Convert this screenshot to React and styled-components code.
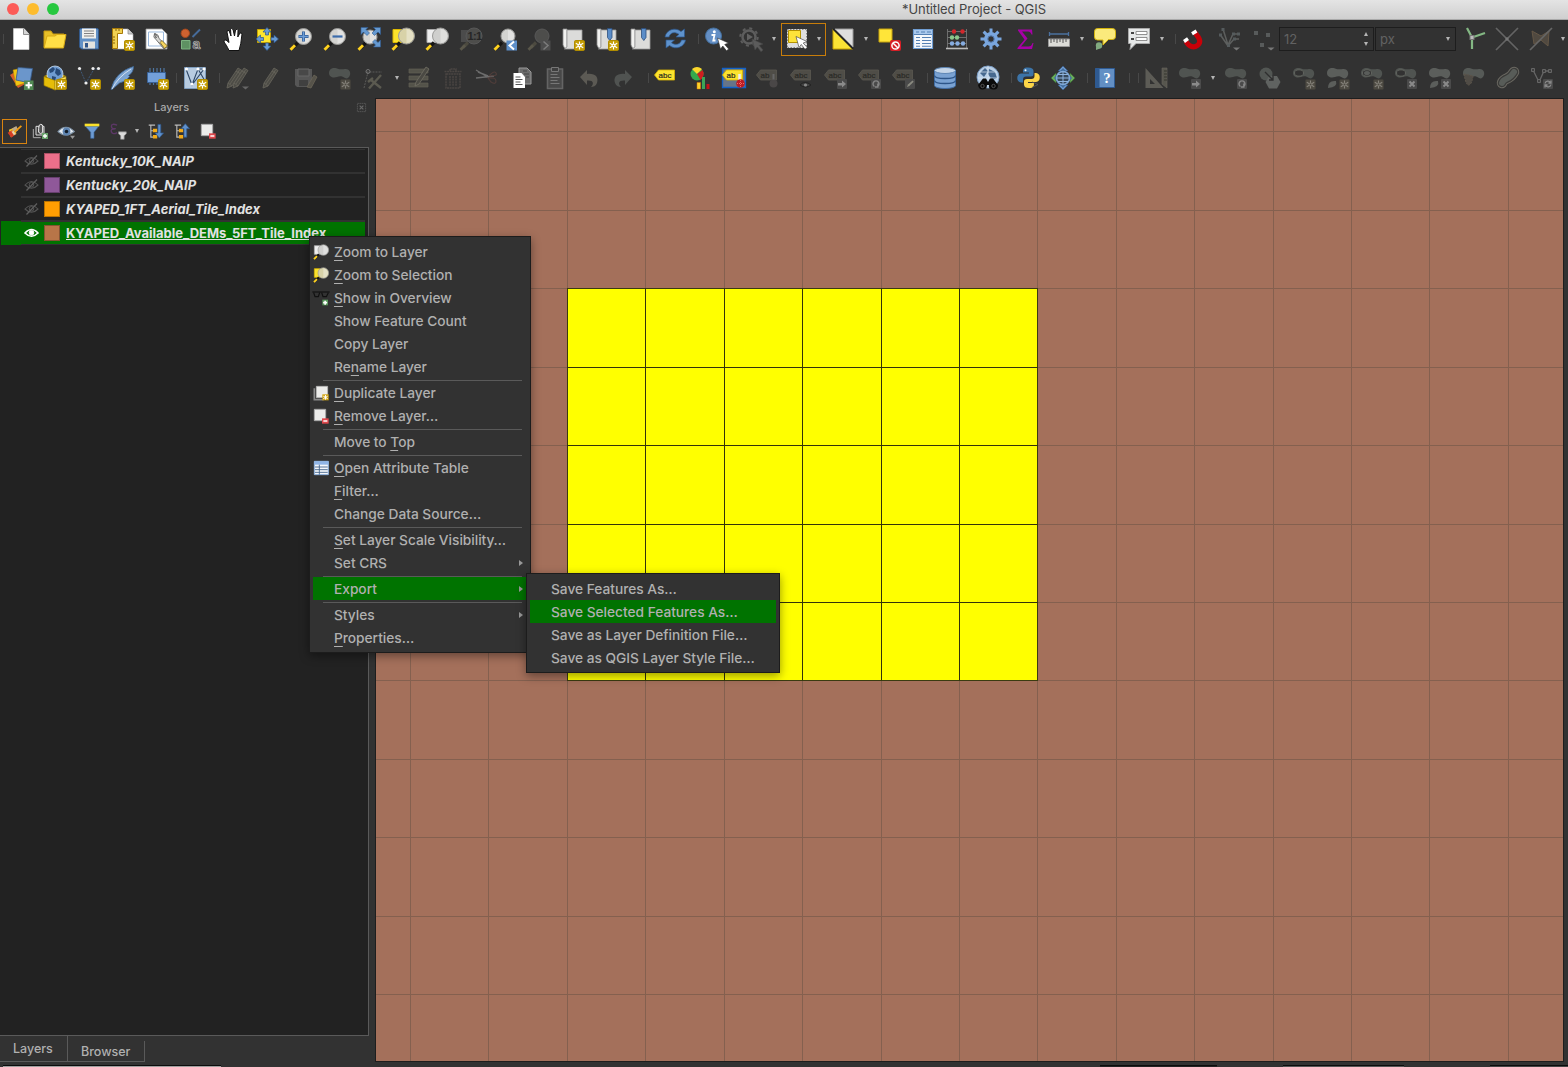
import React from "react";
import styled, { createGlobalStyle, css } from "styled-components";

const Global = createGlobalStyle`
  * { box-sizing: border-box; }
  body { margin: 0; background: #323232; overflow: hidden; }
`;

/* ---------- frame ---------- */
const Window = styled.div`
  width: 1568px; height: 1067px; display: flex; flex-direction: column;
  background: #323232; color: #b4b4b4; overflow: hidden; position: relative;
  font-family: Inter, "Liberation Sans", sans-serif; font-size: 14px;
`;
const TitleBar = styled.header`
  height: 20px; flex: none; display: flex; align-items: center;
  background: linear-gradient(#e4e4e4, #cfcfcf); border-bottom: 1px solid #a9a9a9;
`;
const Lights = styled.div`
  display: flex; gap: 8px; padding-left: 7px; width: 902px; padding-bottom: 1px;
`;
const Light = styled.span`
  width: 12px; height: 12px; border-radius: 50%; background: ${p => p.$c};
`;
const Title = styled.span`
  color: #454545; font-size: 13px; letter-spacing: -0.08px; white-space: pre; padding-bottom: 1px;
`;
const Toolbar = styled.div`
  height: ${p => p.$h}px; flex: none; display: flex; align-items: center; overflow: hidden;
`;
const Tool = styled.div`
  flex: 0 0 ${p => p.$w || 34}px; height: 34px; display: flex; align-items: center; justify-content: center;
`;
const ActiveTool = styled.div`
  flex: 0 0 45px; height: 33px; border: 1px solid #c87d0a; display: flex; align-items: center; padding-left: 3px; gap: 8px;
`;
const Sep = styled.div`
  flex: 0 0 ${p => p.$w}px; height: 10px; border-right: 1px solid #484848; margin-right: ${p => p.$after || 0}px;
`;
const ArrowBox = styled.div`
  flex: 0 0 ${p => p.$w || 12}px; display: flex; justify-content: center; align-items: center;
`;
const Down = styled.i`
  border: 2px solid transparent; border-top: 4px solid #b5b5b5; border-bottom: 0;
`;
const Up = styled(Down)`
  border-top: 0; border-bottom: 4px solid #b5b5b5;
`;
const Field = styled.div`
  flex: 0 0 ${p => p.$w}px; height: 24px; border: 1px solid #1d1d1d; display: flex; align-items: center;
  justify-content: space-between; padding: 0 5px 0 4px; color: #626262; font-size: 13px; margin-right: ${p => p.$mr}px;
`;
const Spin = styled.div`
  display: flex; flex-direction: column; gap: 6px;
`;

/* ---------- body ---------- */
const Body = styled.div`
  flex: none; height: 964px; display: flex;
`;
const Panel = styled.aside`
  width: 369px; display: flex; flex-direction: column; margin-right: 6px;
`;
const PanelHead = styled.div`
  height: 18px; display: flex; align-items: center; padding: 0 3px 0 154px; justify-content: space-between;
  font-size: 11px; letter-spacing: 0px; font-weight: 500; color: #a8a8a8;
`;
const PanelTools = styled.div`
  height: 31px; display: flex; align-items: center; padding-left: 1px; padding-bottom: 1px;
`;
const PTool = styled.div`
  flex: 0 0 26px; height: 25px; display: flex; align-items: center; justify-content: center;
  ${p => p.$on && css`border: 1px solid #d98410; flex-basis: 25px; margin-left: 1px;`}
`;
const List = styled.div`
  flex: 0 0 889px; border: 1px solid #5a5a5a; border-left: 0; background: #222; padding: 0 3px 0 1px;
`;
const LayerRow = styled.div`
  height: 24px; display: flex; align-items: center; padding-left: 23px;
  background:
    linear-gradient(#323232, #323232) 20px 0 / 100% 1px no-repeat,
    linear-gradient(#323232, #323232) 20px 100% / 100% 1px no-repeat,
    ${p => (p.$sel ? "#007300" : "#222")};
  color: #e2e2e2; font-size: 13px; font-weight: 700; font-style: ${p => (p.$sel ? "normal" : "italic")};
  &:first-child { margin-top: 1px; }
`;
const Swatch = styled.span`
  width: 16px; height: 16px; margin: 0 6px 0 5px; background: ${p => p.$c}; border: 1px solid rgba(0,0,0,.28);
`;
const LayerName = styled.span`
  white-space: nowrap; letter-spacing: ${p => p.$ls || 0}px;
  ${p => p.$u && css`text-decoration: underline; text-decoration-thickness: 1px; text-underline-offset: 1px; text-decoration-skip-ink: none;`}
`;
const Tabs = styled.div`
  height: 26px; display: flex; align-items: flex-end; font-size: 12.5px; color: #b0b0b0; font-weight: 500;
`;
const Tab = styled.div`
  width: ${p => p.$w}px; height: ${p => p.$h}px; display: flex; align-items: center; padding-left: 13px;
  border-right: 1px solid #5a5a5a; border-bottom: 1px solid #5a5a5a;
`;
const MapFrame = styled.main`
  width: 1189px; height: 964px; border: 1px solid #1e1e1e; background: #a4705b;
`;
const Status = styled.footer`
  flex: 1; display: flex; align-items: flex-end; padding-left: 3px;
`;
const StatusBit = styled.div`
  width: ${p => p.$w}px; height: 2px; margin-right: ${p => p.$mr}px; border-top: 1px solid #0c0c0c; background: ${p => p.$c};
`;

/* ---------- menus ---------- */
const Menu = styled.nav`
  position: absolute; left: ${p => p.$x}px; top: ${p => p.$y}px; width: ${p => p.$w}px; padding: 3px;
  background: #323232; border: 1px solid #1c1c1c; box-shadow: 0 3px 9px rgba(0,0,0,.4);
`;
const MenuRow = styled.div`
  height: 23px; display: flex; align-items: center; color: #b0b0b0; white-space: pre; font-size: 13.75px; font-weight: 500;
  background: ${p => (p.$on ? "#007300" : "transparent")}; margin-right: ${p => (p.$on && !p.$sub ? "1px" : 0)};
`;
const IconSlot = styled.span`
  width: 21px; height: 20px; display: flex; align-items: center; flex: none;
`;
const Label = styled.span`
  flex: 1; letter-spacing: -0.03px;
  u { text-decoration-thickness: 1px; text-underline-offset: 3px; }
`;
const SubArrow = styled.i`
  border: 3px solid transparent; border-left: 4px solid #989898; border-right: 0; margin-right: ${p => (p.$on ? 3 : 4)}px;
`;
const Rule = styled.hr`
  margin: 2px 5px 0 10px; border: 0; height: 1px; background: #5a5a5a;
`;

/* ---------- icon helpers ---------- */
const Svg = ({ s = 24, children, o }) => (
  <svg width={s} height={s} viewBox="0 0 24 24" opacity={o} fill="none" style={{ overflow: "visible", flex: "none" }}>{children}</svg>
);
const Badge = ({ x = 13, y = 13, g }) => (
  <g transform={`translate(${x} ${y})`}>
    <rect x=".5" y=".5" width="10" height="10" rx="1.3" fill={g ? "#4d4a42" : "#c69f06"} stroke={g ? "#403e39" : "#b08c00"} />
    <path d="M5.5 1.5v8M1.8 3.3l7.4 4.4M1.8 7.7l7.4-4.4" stroke={g ? "#85827a" : "#fff"} strokeWidth="1.1" />
    <circle cx="5.5" cy="5.5" r="1.9" fill={g ? "#77746c" : "#fff"} />
    <circle cx="5.5" cy="5.5" r=".8" fill={g ? "#4d4a42" : "#c69f06"} />
  </g>
);
const GBadge = ({ k }) => (
  <g transform="translate(13 13)">
    <rect width="10" height="10" rx="1" fill="#4a4a4a" />
    {k === "x" && <path d="M2.5 2.5l5 5m0-5l-5 5" stroke="#8a8a8a" strokeWidth="2" />}
    {k === "r" && <path d="M1 4h4V1.5L9 5 5 8.500V6.500H1z" fill="#8a8a8a" />}
    {k === "o" && <path d="M3.500 7.500A3 3 0 1 1 6.500 7.500M6.800 4.500v3.500H4" stroke="#858585" strokeWidth="1.4" />}
    {k === "p" && <path d="M2 8l1-2.500 4.500-4 1.200 1.200L4.300 7z" fill="#8a8a80" />}
    {k === "s" && <path d="M2 4.500a3 3 0 0 1 5.500-1M8 5.500a3 3 0 0 1-5.500 1M8 1.500v2.500H5.500M2 8.500V6h2.500" stroke="#8a8a8a" strokeWidth="1.3" />}
  </g>
);
const Lens = ({ x = 14.5, y = 9.5, r = 8, g, glass = "#d3d3d0" }) => (
  <g>
    <path d="M9 15.500L4 20.500" stroke={g ? "#4c4a40" : "#151515"} strokeWidth="3.200" />
    <path d="M6 18.200L1.500 22.700" stroke={g ? "#5a574a" : "#ffd21e"} strokeWidth="2.800" />
    <circle cx={x} cy={y} r={r} fill={g ? "#4d4d4b" : glass} stroke={g ? "#585858" : "#9a9a98"} />
    {!g && <path d={`M${x} ${y - r + 1}a${r - 1} ${r - 1} 0 0 1 0 ${2 * r - 2}z`} fill="#fff" opacity=".35" />}
  </g>
);
const Cursor = ({ g, x = 12, y = 11 }) => (
  <path transform={`translate(${x} ${y})`} d="M0 0l3 11 2.300-3 3.700 4.800 2.200-1.800-4-4.500 3.800-1.500z" fill={g ? "#5b5b5b" : "#fff"} stroke={g ? "#444" : "#333"} strokeWidth=".6" />
);
const Tag = ({ g, children, cut }) => (
  <g>
    <path d="M.5 9l4-5h16v10H4.500z" fill={g ? "#4f4d47" : "#fbe32f"} stroke={g ? "#5a5850" : "#d9b400"} strokeWidth=".8" />
    <text x="4.500" y="11.500" fontFamily="Liberation Sans, sans-serif" fontSize="8" fill={g ? "#2a2a26" : "#2c2c20"} stroke={g ? "#2a2a26" : "#2c2c20"} strokeWidth=".2">{cut ? "ab" : "abc"}</text>
    {children}
  </g>
);
const Blob = ({ c = "#505451" }) => (
  <path d="M1 7c0-4 4-6 8-4.500 3 1 5 1 8 .5 4-.5 6 3 5 6s-3 4-5 3c-3-2-5-2-8-1-4 1.300-8 0-8-4z" fill={c} />
);
const BlobRing = () => (
  <g><Blob /><ellipse cx="7" cy="7" rx="4.500" ry="3.200" fill="#323232" stroke="#62655f" /></g>
);
const Pencil = ({ dx = 0 }) => (
  <path transform={`translate(${dx} 0)`} d="M4 22l1-5L15 2l4 2.500L9 20z M5 17l4 3 M13 5l4 2.500 M7 18L16.500 4" fill="#4d4c46" stroke="#65635a" strokeWidth=".9" />
);
const Page = ({ children }) => (
  <g>
    <path d="M2 2h4v19H3.500L2 18z" fill="#f2f2f0" stroke="#8b8b8b" strokeWidth=".8" />
    <path d="M6 3h15v19H3.500L6 20z" fill="#dcdcda" stroke="#9a9a9a" strokeWidth=".8" />
    {children}
  </g>
);
const BM = () => <path d="M12.500 1.500h4.500v9l-2.200 3-2.300-3z" fill="#5b8dc8" stroke="#2c4f7e" strokeWidth=".8" />;
const Globe = ({ cy = 9, r = 8 }) => (
  <g>
    <circle cx="12" cy={cy} r={r} fill="#6f9bd0" stroke="#c4d6ea" strokeWidth=".8" />
    <path d={`M6 ${cy - 4}l4-3 2 2-2 3-3 1zM13 ${cy - 6}l4 2 1 4-3 2-3-3zM9 ${cy + 2}l4 1-1 4-3-1z`} fill="#284a78" />
  </g>
);

const I = {
  doc: <Svg><path d="M4.500 1.500h10.500l5 5.500v15.500h-15.500z" fill="#fff" stroke="#d8d8d8" strokeWidth=".6" /><path d="M14.500 1.500v6h5.500" fill="#d5d5d5" stroke="#777" strokeWidth=".8" /></Svg>,
  folder: <Svg><path d="M1 20V4h7l2 3h11v4" fill="#e8c028" stroke="#c79a10" /><path d="M1 21L4 9h8l2-1.500h9L20.500 21z" fill="#ffde46" stroke="#d8aa14" /></Svg>,
  save: <Svg><path d="M2.500 3q0-1.500 1.500-1.500h16q1.500 0 1.500 1.500v19h-17l-2-2z" fill="#6291c6" stroke="#33598b" /><path d="M5 1.500h14v10H5z" fill="#f1f1ee" /><path d="M7 4h10M7 6.500h10M7 9h10" stroke="#828282" strokeWidth="1.100" /><path d="M6 14.500h12v7H6z" fill="#e3e3df" /><path d="M8 16h3v4.500H8z" fill="#31578a" /></Svg>,
  newLayout: <Svg><path d="M2 2h15l5 5v15H2z" fill="#fff" stroke="#bbb" strokeWidth=".6" /><path d="M17 2v5h5" fill="#ccc" stroke="#888" strokeWidth=".7" /><path d="M1.500 1.500h10v5h-5v15h-5z" fill="#f1d152" stroke="#a87a08" /><path d="M2 10h2M2 13h2M2 16h2M8 2v2M5 2v2" stroke="#8a6208" /><Badge /></Svg>,
  layoutMgr: <Svg><path d="M1 2h16l5 5v15H1z" fill="#fff" stroke="#999" strokeWidth=".8" /><path d="M3.500 5h15v14h-15z" stroke="#9bb9dc" /><path d="M9.500 6.500q-2 4 1.500 6l8 9.500 3.500-2.500-8.500-8q0-4-4-5l2 3-1 1.500z" fill="#d8d8d5" stroke="#555" strokeWidth=".8" /><path d="M15 15.500l4.500 6 3-2.500-5.500-5.500z" fill="#f5d45e" stroke="#5a4a18" strokeWidth=".7" /></Svg>,
  style: <Svg><circle cx="6.300" cy="6.300" r="4.200" fill="#cf6230" stroke="#a4481d" /><path d="M13.500 10L21 2.500" stroke="#466b9a" strokeWidth="2" /><path d="M2.500 13.500h8.500v8.500H2.500z" fill="#5e9162" stroke="#7db381" /><text x="13.500" y="22" fontFamily="Liberation Sans, sans-serif" fontSize="14" fontWeight="700" fill="#555" stroke="#b0b0b0" strokeWidth=".7">a</text></Svg>,
  hand: <Svg><path d="M8 23.500C6 19 4.500 17 3 15q-.5-2.500 2-2l3 2.500L6 5q0-2 2-1.500L10 9 9.500 2.500q1-2 2.500 0L13.500 9 14.500 3q1.500-1.500 2.500.5L16.800 10 19 6q1.700-.5 2 1-1 11-3 16.500z" fill="#fff" stroke="#111" strokeWidth="1" /></Svg>,
  panSel: <Svg><path d="M2.500 2.500h13v13h-13z" fill="#fde52e" stroke="#c8a400" /><path d="M12 .5l4 4.500h-2.500v3h-3V5H8zM12 23.500l-4-4.500h2.500v-3h3v3H16zM1 12l4.500-4v2.500h3v3h-3V16zM23.500 12l-4.500-4v2.500h-3v3h3V16z" fill="#6799d2" stroke="#2d5489" strokeWidth=".7" /></Svg>,
  zoomIn: <Svg><Lens /><path d="M9.500 9.500h10M14.500 4.500v10" stroke="#2f5b94" strokeWidth="3" /><path d="M10 9.500h9M14.500 5v9" stroke="#6d9dd6" strokeWidth="1.500" /></Svg>,
  zoomOut: <Svg><Lens /><path d="M9.500 9.500h10" stroke="#3c6cab" strokeWidth="2.200" /></Svg>,
  zoomFull: <Svg><Lens x={13} y={10} r={7} /><path d="M4 .5h7l-2 2 3.500 3.500-2.500 2.500L6.500 5 4 7.500zM23.500 .5h-7l2 2L15 6l2.500 2.500L21 5l2.500 2.500zM23.500 20h-7l2-2-3-3 2.500-2.500 3 3 2.500-2.500z" fill="#6599d0" stroke="#2f5a92" strokeWidth=".6" /></Svg>,
  zoomSel: s => <Svg s={s}><path d="M2 2.500h9v13H2z" fill="#fbe22c" stroke="#dcb800" /><Lens x={15.5} y={9} glass="#d8d2a8" /></Svg>,
  zoomLayer: s => <Svg s={s}><path d="M2 2.500h9v13H2z" fill="#eee" stroke="#aaa" /><Lens x={15.5} y={9} glass="#cfcfcd" /></Svg>,
  zoom11: <Svg><path d="M2 3h9v12H2z" fill="#4b4b4b" /><Lens g x={15} y={9} /><text x="8.500" y="13" fontFamily="Liberation Sans, sans-serif" fontSize="11" fontWeight="700" fill="#262626" letterSpacing="-.6">1:1</text></Svg>,
  zoomLast: <Svg><Lens x={15} y={9} r={7} /><path d="M13.500 13.500h10.500v10H13.500z" fill="#5d8fc9" /><path d="M21 14.500L16.500 18.500l4.500 4" stroke="#fff" strokeWidth="2" /></Svg>,
  zoomNext: <Svg><Lens g x={15} y={9} r={7} /><path d="M13.500 13.500h10v10h-10z" fill="#4d4d4d" /><path d="M16.500 14.500l4.500 4-4.500 4" stroke="#7c7c7c" strokeWidth="1.500" /></Svg>,
  bmNew: <Svg><Page /><Badge /></Svg>,
  bmAdd: <Svg><Page><BM /></Page><Badge /></Svg>,
  bm: <Svg><Page><BM /></Page></Svg>,
  refresh: <Svg><path d="M2 10C3 3 12-.5 18 4.500L21.500 2v8h-8.500l3-2.700C11 4 7 6 6 10zM22.500 13c-1 7-10 10.500-16 5.500L3 21v-8h8.500l-3 2.700C13 19 17.500 17 18.500 13z" fill="#5e92cc" stroke="#2c578e" strokeWidth=".7" /></Svg>,
  info: <Svg><circle cx="9.500" cy="9" r="8" fill="#648fc5" stroke="#44709f" /><circle cx="10.300" cy="4.700" r="1.500" fill="#fff" /><path d="M7.500 8h3L9.300 13.500h2.200" stroke="#fff" strokeWidth="1.800" /><Cursor x={13.5} y={11} /></Svg>,
  gearRun: <Svg><circle cx="11" cy="10" r="6.500" stroke="#5d5d5d" strokeWidth="2.500" /><circle cx="11" cy="10" r="8.700" stroke="#5d5d5d" strokeWidth="2" strokeDasharray="3 3.830" /><path d="M9 6.500l6 3.500-6 3.500z" fill="#626262" /><Cursor g x={14} y={12} /></Svg>,
  select: <Svg><path d="M2 2h20v19H2z" fill="#dedede" stroke="#333" strokeDasharray="1.500 1.500" /><path d="M3.500 3.500h12v12h-12z" fill="#fde33a" stroke="#b59300" /><Cursor x={11} y={9.500} /></Svg>,
  selectVal: <Svg><path d="M2 2v20h20z" fill="#fbe335" stroke="#c9a200" /><path d="M4 2h18v18z" fill="#dedede" stroke="#999" /><path d="M2 2l20 20" stroke="#222" strokeWidth="1.500" /></Svg>,
  deselect: <Svg><path d="M2 2h13v13H2z" fill="#ffe539" stroke="#c7a30d" /><rect x="13" y="13" width="11" height="11" rx="2" fill="#d61f26" /><circle cx="18.500" cy="18.500" r="3.600" stroke="#fff" strokeWidth="1.500" /><path d="M16 16l5 5" stroke="#fff" strokeWidth="1.500" /></Svg>,
  table: s => <Svg s={s}><path d="M2.500 2.500h19v19h-19z" fill="#f4f7fb" stroke="#6f9dd3" strokeWidth="1.200" /><path d="M3 3h18v4H3z" fill="#a9c8ec" /><path d="M3 7.500h18M5 5h3M10 5h4M16 5h4M5 10.500h4M11 10.500h9M5 13.500h4M11 13.500h9M5 16.500h4M11 16.500h9M5 19.300h4M11 19.300h9" stroke="#5580b3" strokeWidth="1.100" /></Svg>,
  tableS: <Svg s={16}><path d="M2 2h21v20H2z" fill="#f4f7fb" stroke="#8fb4e0" strokeWidth="1.500" /><path d="M2 2h21v5H2z" fill="#8fb4e6" /><path d="M3 10.500h19M3 14.500h19M3 18.500h19M9.500 7v15" stroke="#3f5f88" strokeWidth="1.300" /></Svg>,
  abacus: <Svg><path d="M2.500 2v19M21.500 2v19M2.500 4.500h19M2.500 10.500h19M2.500 16.500h19" stroke="#757575" strokeWidth=".9" /><path d="M1 21.500h22" stroke="#bbb" strokeWidth="1.600" />{[[9,4.500,"#d3272b"],[17.500,4.500,"#d3272b"],[7,10.500,"#8bc78b"],[12,10.500,"#8bc78b"],[7,16.500,"#86ace0"],[12.500,16.500,"#86ace0"],[18,16.500,"#86ace0"]].map((b, i) => <circle key={i} cx={b[0]} cy={b[1]} r="2.200" fill={b[2]} />)}</Svg>,
  gear: <Svg><path d="M12 1.500v21M1.500 12h21M4.600 4.600l14.800 14.800M19.400 4.600L4.600 19.400" stroke="#79a6de" strokeWidth="3" /><circle cx="12" cy="12" r="7" fill="#79a6de" /><circle cx="12" cy="12" r="3.200" fill="#323232" stroke="#567fb5" /></Svg>,
  sigma: <Svg><path d="M5 2.500h14l.5 5h-1q-1-3-3.500-3H9l5.500 7L8 19.500h7.500q3 0 4-3.500h1l-1.500 6H4.500v-1l7-8.500L5 3.500z" fill="#a700a7" /></Svg>,
  ruler: <Svg><path d="M2 7h20M2.500 5v4M21.500 5v4" stroke="#4b719f" strokeWidth="1.300" /><path d="M1.500 12h21v7.500h-21z" fill="#dcdcd8" stroke="#999" /><path d="M4 12v4M7 12v3M10 12v4M13 12v3M16 12v4M19 12v3" stroke="#555" /></Svg>,
  tip: <Svg><path d="M4.500 1.500h15q3 0 3 3v5q0 3-3 3h-4L10 18v-5H4.500q-3 0-3-3V4.500q0-3 3-3z" fill="#fbea7c" stroke="#d4b40c" /><circle cx="6" cy="18.500" r="3.200" fill="#81aa80" /><path d="M3 20v3l4-1.500z" fill="#81aa80" /></Svg>,
  anno: <Svg><path d="M1.500 1.500h21v15H9L3 22.500l1-6H1.500z" fill="#e6e8e8" stroke="#aaa" /><path d="M4 6h3M4 12h3" stroke="#444" strokeWidth="1.800" /><path d="M9 4.500h11v3H9zM9 10.500h11v3H9z" fill="#fff" stroke="#777" strokeWidth=".8" /></Svg>,
  magnet: <Svg><path d="M5 14.500q4 6.500 9.500 5 6.500-3 3-9L13.500 5" stroke="#c90008" strokeWidth="5.200" /><path d="M3 14.500l4-2.800M11 6.800l4.500-2.800" stroke="#fff" strokeWidth="3.400" /></Svg>,
  vgray: <Svg><g transform="translate(3 0)"><path d="M4 2l5 16 5-11h6M1.500 8l7.500 11L15 12h5" stroke="#5d5f5e" strokeWidth="1.500" /><path d="M2.500 1h3v3h-3zM0 6.500h3v3H0zM13 5.500h3v3h-3zM18 5.500h3v3h-3zM14 10.500h3v3h-3zM8 17h3v3H8z" fill="#555b5d" /><path d="M14 20.500h7l-3.500 3z" fill="#777" /></g></Svg>,
  dots: <Svg><g transform="translate(1 0)"><path d="M2 4h4v4H2zM14 6h4v4h-4zM8 16h4v4H8z" fill="#585b5b" /><path d="M15.500 20.500h7l-3.500 3z" fill="#777" /></g></Svg>,
  topo: <Svg><path d="M11 10.500L6 1M11 10.500L24 6M11 10.500V22" stroke="#83b783" strokeWidth="2.200" /><rect x="9" y="8.500" width="4" height="4" fill="#bbb" stroke="#777" /></Svg>,
  cross: <Svg><path d="M1 1l22 22M23 1L1 23" stroke="#646464" strokeWidth="1.700" /><path d="M10.500 10.500h3v3h-3z" fill="#777" /></Svg>,
  crossPoly: <Svg><path d="M3 4l9 5 8-5-1 15-7-6-7 4z" fill="#504940" stroke="#655746" /><path d="M1 23L23 1" stroke="#666" strokeWidth="1.700" /></Svg>,

  dsm: <Svg><path d="M1 9l8-5 9 13-9 5z" fill="#d85e2a" /><path d="M4 4l9-2 3 15-9 3z" fill="#f2c514" stroke="#ad8500" strokeWidth=".5" /><path d="M9 1.500l14.500 1L21 17 7 14z" fill="#6b96cb" stroke="#365b8c" strokeWidth=".8" /><path d="M15 14.500h9.500V24H15z" fill="#528a54" /><path d="M19.700 16v6.500M16.500 19.300h6.500" stroke="#fff" strokeWidth="2" /></Svg>,
  pkg: <Svg><path d="M1 10l11-4 11 4-11 4z" fill="#cfa800" /><Globe cy={8} /><path d="M1 10.500l11 4V24L1 19.500z" fill="#e6bd08" stroke="#9d7b00" strokeWidth=".7" /><path d="M23 10.500l-11 4V24l11-4.500z" fill="#fee45b" stroke="#a68610" strokeWidth=".7" /><Badge /></Svg>,
  vnew: <Svg><path d="M3 3l6 14L17 3h5" stroke="#3f5876" strokeDasharray="2 1" /><circle cx="2.500" cy="2.500" r="1.600" fill="#eee" /><circle cx="9" cy="17" r="1.600" fill="#eee" /><circle cx="16" cy="2.500" r="1.600" fill="#eee" /><circle cx="21.500" cy="2.500" r="1.600" fill="#eee" /><Badge /></Svg>,
  feather: <Svg><path d="M0 23.500Q4 6 22.500.5q0 6-5 9l1 1q-3 5-10 6.500L1 23.500z" fill="#7da4d2" stroke="#3e6797" strokeWidth=".8" /><path d="M1 23Q7 11 20 3" stroke="#dce7f4" strokeWidth=".9" /><Badge /></Svg>,
  chip: <Svg><path d="M5 6V2M8.500 6V2M12 6V2M15.500 6V2M19 6V2M5 16v3M8.500 16v3M12 16v3" stroke="#4f759f" strokeWidth="1.200" /><path d="M2.500 6.500h18v10h-18z" fill="#73a0da" stroke="#3a6398" /><Badge /></Svg>,
  vmesh: <Svg><path d="M1.500 1.500h21v21h-21z" fill="#b7cbe0" stroke="#7e9dbe" /><path d="M3 3l6 16L15 3l6 0L9 19M15 3l7 12" stroke="#2c4665" strokeWidth="1.100" /><circle cx="3.500" cy="3" r="1.600" fill="#fff" /><circle cx="9" cy="18" r="1.600" fill="#fff" /><circle cx="15" cy="3" r="1.600" fill="#fff" /><circle cx="21" cy="3" r="1.600" fill="#fff" /><Badge x={14} /></Svg>,
  pencils: <Svg><Pencil dx={-2} /><Pencil dx={4} /><path d="M17 20.500h7l-3.500 3z" fill="#666" /></Svg>,
  pencil: <Svg><Pencil /></Svg>,
  saveG: <Svg><path d="M2 3h17v18H4l-2-2z" fill="#565656" /><path d="M5 3h11v7H5z" fill="#484848" stroke="#666" /><path d="M6 14h9v6H6z" fill="#404040" /><path d="M14 21l7-12 3 2-6 11z" fill="#56534a" stroke="#6e685a" strokeWidth=".7" /></Svg>,
  blobStar: <Svg><Blob /><Badge g x={12} /></Svg>,
  vtools: <Svg><path d="M2 22L6 6h14M4 6h3" stroke="#5a5a58" strokeDasharray="2 1" /><circle cx="6" cy="5.500" r="2" stroke="#747474" /><path d="M7 22.500L19 9M9 14l10 8M6 16l5-4" stroke="#5b5a50" strokeWidth="2.400" /></Svg>,
  multi: <Svg><path d="M2 3h19v4H2zM2 10h19v4H2zM2 17h19v4H2z" fill="#54534a" stroke="#626053" strokeWidth=".7" /><path d="M8 20l1-4L19 1l3 2-10 15z" fill="#4a4943" stroke="#727064" strokeWidth=".8" /></Svg>,
  trash: <Svg><path d="M5 8h14v14H5zM3.500 5.500h17M9 5V3h6v2M9 10v10M12 10v10M15 10v10" stroke="#4b4643" strokeWidth="1.400" strokeDasharray="2 .6" /></Svg>,
  cut: <Svg><path d="M1 4l13 8M1 12l18-2M3 6l10 4" stroke="#6c6c6c" strokeWidth="1.400" /><path d="M13 12q8-1 8 3t-5 1zM14 10q5-6 7-3t-6 3" stroke="#4f3d3a" strokeWidth="1.200" /></Svg>,
  copy: <Svg><path d="M10 2h8l4 4v12H10z" fill="#6b6b6b" stroke="#999" /><path d="M14 5h4M15 8h5M17 11h3" stroke="#444" /><path d="M4.500 7h8l3.500 4v11h-11.500z" fill="#fff" /><path d="M6.500 11h5M6.500 13.500h7M6.500 16h5M6.500 18.500h7" stroke="#555" /></Svg>,
  paste: <Svg><path d="M4.500 3h15v19.500h-15z" stroke="#646464" strokeWidth="1.600" fill="#484848" /><path d="M8.500 1.500h7v4h-7z" fill="#3e3e3e" stroke="#777" /><path d="M7.500 8.500h7M7.500 11.500h9M7.500 14.500h7M7.500 17.500h9" stroke="#777" /></Svg>,
  undo: <Svg><path d="M3 11l7-7v4c8-1 12 3 10 9-1 3-4 4-6 4 3-3 3-7-4-6.500V19z" fill="#5c5a54" /></Svg>,
  redo: <Svg><path d="M21 11l-7-7v4C6 7 2 11 4 17c1 3 4 4 6 4-3-3-3-7 4-6.500V19z" fill="#505351" /></Svg>,
  tag: <Svg><Tag /></Svg>,
  diagram: <Svg><circle cx="9" cy="8" r="6.500" fill="#35a94c" /><path d="M9 8L4 3q5-4 10 0z" fill="#fcd62b" /><path d="M9 8l5.500-4q3 5-2 10z" fill="#d01d1f" /><path d="M9 16.500h3.500V23H9z" fill="#fcd22a" stroke="#d87500" strokeWidth=".5" /><path d="M14 11h3v12h-3z" fill="#3ba558" /><path d="M18.500 18h3v5h-3z" fill="#c31218" /></Svg>,
  tagOn: <Svg><path d="M.5 2.500h23v19H.5z" fill="#667488" stroke="#1261c8" strokeWidth="1.300" /><Tag cut /><path d="M17.500 14V8" stroke="#eee" strokeWidth="2.500" /><circle cx="18.500" cy="17.500" r="4.300" fill="#bd1c24" /><path d="M15 17.500h7M18.500 14v7" stroke="#e66" strokeDasharray="1 1" /></Svg>,
  tagPin: <Svg><Tag g cut /><path d="M17.500 14V8" stroke="#666" strokeWidth="2" /><circle cx="17.500" cy="17.500" r="4" fill="#4a4747" /></Svg>,
  tagEye: <Svg><Tag g /><path d="M10 19q5-5 11 0-5 4-11 0z" fill="#444" stroke="#222" /><circle cx="15.500" cy="19" r="1.600" fill="#888" /></Svg>,
  tagMove: <Svg><Tag g /><GBadge k="r" /></Svg>,
  tagRot: <Svg><Tag g /><GBadge k="o" /></Svg>,
  tagEdit: <Svg><Tag g /><GBadge k="p" /></Svg>,
  db: <Svg><path d="M1.500 4.500v15c0 4 21 4 21 0v-15z" fill="#7aa2d2" stroke="#416ea6" /><ellipse cx="12" cy="4.500" rx="10.500" ry="3" fill="#c4d5e8" stroke="#5e86b5" /><path d="M1.500 9.500c0 4 21 4 21 0M1.500 14.500c0 4 21 4 21 0" stroke="#2d5588" strokeWidth="1.400" /></Svg>,
  metasearch: <Svg><circle cx="12" cy="11" r="11" fill="#b9cfe6" stroke="#7a9cc4" /><path d="M4 7l5-5 3 3-4 6zM13 3l6 3 2 6-5 2-4-6z" fill="#47698f" /><path d="M1.500 12h21M3 6h18M12 0v22" stroke="#dbe7f2" strokeWidth=".7" /><path d="M7 12.500h3l2 3.500 2-3.500h3l5 6.500q0 5-5 4.500t-4-4.500h-2q0 4-4 4.500T2 19z" fill="#0b0b0b" /><circle cx="6.500" cy="20" r="1.700" stroke="#555" /><circle cx="17.500" cy="20" r="1.700" stroke="#555" /></Svg>,
  python: <Svg><path d="M11 1.500c-5 0-5 2-5 5h6v1H4c-5 0-5 9 0 9h2v-3q0-3 3-3h5q2.500 0 2.500-2.500V5q0-3.500-5.500-3.500z" fill="#3c74a8" /><path d="M12 22c5 0 5-2 5-5h-6v-1h8c5 0 5-9 0-9h-1.500v3q0 3-3 3H10q-3 0-3 2.500v3q0 3.500 5 3.500z" fill="#fbd548" /><circle cx="8.500" cy="4.200" r="1" fill="#fff" /><path d="M15 16l6 2.500-6 3" stroke="#555" strokeWidth="1" /></Svg>,
  target: <Svg><path d="M12 0l5 5H7zM12 24l5-5H7z" fill="#6f9bcf" stroke="#305688" strokeWidth=".6" /><path d="M0 12l5-5v10zM24 12l-5-5v10z" fill="#6aad5c" stroke="#386a31" strokeWidth=".6" /><path d="M12 2l9 10-9 10-9-10z" fill="#426e9e" /><circle cx="12" cy="12" r="6.500" fill="#36485b" stroke="#7da6d6" strokeWidth="1.500" /><path d="M5.500 12h13M12 5.500v13M7 8.500h10M7 15.500h10" stroke="#8db3de" strokeWidth="1" /></Svg>,
  help: <Svg><path d="M2.500 2.500h19v19h-19z" fill="#628fc4" stroke="#2e5a92" /><path d="M2.500 2.500h4v19h-4z" fill="#2f5a91" /><text x="14" y="17" textAnchor="middle" fontFamily="Liberation Serif, serif" fontSize="15" fontWeight="700" fill="#fff">?</text></Svg>,
  setsq: <Svg><path d="M1.500 2v20h18zM6 13v5h5z" fill="#5d5c56" fillRule="evenodd" /><path d="M18 2h5v20l-5-4z" fill="#57564e" stroke="#68675e" strokeWidth=".6" /><path d="M20 5h3M20 8h3M20 11h3M20 14h3" stroke="#36362f" /></Svg>,
  blobMove: <Svg><Blob /><GBadge k="r" /></Svg>,
  blobRot: <Svg><Blob /><GBadge k="o" /></Svg>,
  hex: <Svg><circle cx="8" cy="8" r="6.500" fill="#525653" /><path d="M11 10h8l3.500 6-3.500 6.500h-8L7.500 16z" fill="#606361" /><path d="M7 6l8 8M15 10v4h-4" stroke="#2e2e2e" strokeWidth="1.300" /></Svg>,
  ringStar: <Svg><BlobRing /><Badge g /></Svg>,
  partStar: <Svg><Blob c="#5b5e5b" /><path d="M2 22q0-8 8-7 2 6-8 7z" fill="#5b5e5b" /><Badge g /></Svg>,
  fillStar: <Svg><BlobRing /><ellipse cx="7" cy="7" rx="3" ry="2" fill="#5a5d5a" /><Badge g /></Svg>,
  ringX: <Svg><BlobRing /><GBadge k="x" /></Svg>,
  partX: <Svg><Blob c="#5b5e5b" /><path d="M2 22q0-8 8-7 2 6-8 7z" fill="#5b5e5b" /><GBadge k="x" /></Svg>,
  reshape: <Svg><Blob c="#565a57" /><path d="M2 8q2 12 5 11t4-9z" fill="#504c46" stroke="#5c554b" strokeDasharray="2 1" /></Svg>,
  offset: <Svg><path d="M6 17Q7 14 11 12.500T18 6" stroke="#6b6962" strokeWidth="10.500" strokeLinecap="round" /><path d="M6 17Q7 14 11 12.500T18 6" stroke="#3a3a38" strokeWidth="8.500" strokeLinecap="round" /><path d="M6 17Q7 14 11 12.500T18 6" stroke="#585c58" strokeWidth="6" strokeLinecap="round" /></Svg>,
  vrot: <Svg><path d="M3 4l6 12L14 5h7" stroke="#666" strokeWidth="1.300" /><path d="M1.500 2.500h3v3h-3zM12.500 3.500h3v3h-3zM18.500 3.500h3v3h-3zM7.500 13.500h3v3h-3z" stroke="#666" fill="#404040" /><GBadge k="s" /></Svg>,
  trim: <Svg><path d="M5 10h8M6 18h8" stroke="#666" strokeWidth="1.600" /><path d="M5 13h5v8H5z" fill="#4a4a4a" /></Svg>,

  brush: <Svg s={15}><path d="M3 9l10-4 2 11-9 5z" fill="#efc52a" /><path d="M1 14l7-4 6 6-7 6z" fill="#d33d25" /><path d="M8 7l7-4 3 7-6 4z" fill="#b9a98c" /><path d="M7 12l4-1 3 5-3 2z" fill="#e9d8a8" /><path d="M12 13L23 3" stroke="#f19c13" strokeWidth="3" /></Svg>,
  addGroup: <Svg s={16}><path d="M2 9v13h11" stroke="#aaa" strokeWidth="1.500" /><path d="M6 5h12v13H6z" fill="#3c3c3c" stroke="#ddd" strokeWidth="1.500" /><path d="M10 8q0-6 3-6t3 3v9q-3 4-6 0z" fill="#555" stroke="#f4f4f4" strokeWidth="1.500" /><path d="M15 15h9v9h-9z" fill="#68a36a" /><path d="M19.500 16.500v6M16.500 19.500h6" stroke="#fff" strokeWidth="2" /></Svg>,
  eye: <Svg s={17}><path d="M0 12Q11 0 23 12 11 22 0 12z" fill="#e8edf2" stroke="#8295a8" strokeWidth="1.500" /><circle cx="12" cy="12" r="5.500" fill="#5e84b1" /><circle cx="12" cy="12" r="2.500" fill="#121c28" /><path d="M17 18h7l-3.500 4.500z" fill="#999" /></Svg>,
  funnel: <Svg s={16}><path d="M2 5h20l-7 9v9h-5v-9z" fill="#6d9bd2" stroke="#3a679f" /><path d="M1 1h22v4H1z" fill="#fbe12b" /></Svg>,
  expr: <Svg s={17}><path d="M10 3Q2 0 2 4.500T8 8Q0 8 2 12.500t8 1" stroke="#5c3766" strokeWidth="2" /><path d="M12 12.500h11v2.500l-3 3v5h-5v-5l-3-3z" fill="#dcdcdc" stroke="#888" /></Svg>,
  expand: <Svg s={17}><path d="M1 3h9M4 3v17h7M4 11h6" stroke="#bbb" strokeWidth="1.600" /><path d="M7 8h6v5H7zM7 17h6v5H7z" fill="#f1aa18" /><path d="M14 2h4v12h4l-6 7-6-7h4z" fill="#5f90cb" stroke="#2d5689" /></Svg>,
  collapse: <Svg s={17}><path d="M1 3h9M4 3v17h7M4 11h6" stroke="#bbb" strokeWidth="1.600" /><path d="M7 8h6v5H7zM7 17h6v5H7z" fill="#f1aa18" /><path d="M14 20h4V8h4l-6-7-6 7h4z" fill="#5f90cb" stroke="#2d5689" /></Svg>,
  remove: <Svg s={16}><path d="M2 2h17v17H2z" fill="#ececea" stroke="#aaa" strokeWidth="1.500" /><path d="M13.500 15.500h10v8h-10z" fill="#e0474c" /><path d="M15.500 19.500h6" stroke="#fff" strokeWidth="2.200" /></Svg>,
  dup: <Svg s={16}><path d="M2 5v17h14" stroke="#888" strokeWidth="2.500" /><path d="M5 2h17v17H5z" fill="#ececea" stroke="#bbb" /><path d="M14 14h9.500v9H14z" fill="#d1a40e" /><path d="M18.700 15v7M15.500 16.800l6.500 3.700M15.500 20.500l6.500-3.700" stroke="#fff" strokeWidth="1.500" /></Svg>,
  overview: <Svg s={16}><path d="M-1 3h26" stroke="#111" strokeWidth="1.800" /><path d="M1 4l2 6h5l2-6M13 4l2 6h5l3-6" stroke="#111" strokeWidth="1.800" /><path d="M14 14.500h8.500V23H14z" fill="#579659" /><path d="M18.200 16v6M15.200 19h6" stroke="#fff" strokeWidth="2.400" /></Svg>,
  close: <Svg s={9}><path d="M1 1h22v22H1z" stroke="#585858" strokeWidth="2.400" strokeDasharray="4 1.500" /><path d="M7 7l10 10M17 7L7 17" stroke="#6a6a6a" strokeWidth="3" /></Svg>,
};

const LayerEye = ({ on }) => (
  <svg width="15" height="14" viewBox="0 0 15 14" fill="none" style={{ flex: "none" }}>
    <path d="M1 7Q7.500 0 14 7 7.500 13.500 1 7z" stroke={on ? "#fff" : "#555"} strokeWidth={on ? 1.600 : 1.100} />
    <circle cx="7.500" cy="6.800" r="2.300" fill={on ? "#fff" : "none"} stroke={on ? "#fff" : "#555"} />
    {!on && <path d="M2.500 12.500L13 1.500" stroke="#606060" strokeWidth="1.200" />}
  </svg>
);

const A = w => ({ arrow: w });
const S = (w, after) => ({ sep: w, after });
const T = (icon, w) => ({ icon, w });
const ROW1 = [S(4), I.doc, I.folder, I.save, I.newLayout, I.layoutMgr, I.style, S(8), I.hand, I.panSel, I.zoomIn, I.zoomOut, I.zoomFull,
  I.zoomSel(), I.zoomLayer(), I.zoom11, I.zoomLast, I.zoomNext, I.bmNew, I.bmAdd, I.bm, I.refresh, S(7), I.info, I.gearRun, A(14), "active",
  I.selectVal, A(12), I.deselect, I.table(), I.abacus, I.gear, I.sigma, I.ruler, A(12), I.tip, I.anno, A(11), S(9), I.magnet, T(I.vgray, 36), T(I.dots, 33)];
const ROW2 = [S(4), I.dsm, I.pkg, I.vnew, I.feather, I.chip, S(3, 1), I.vmesh, S(8), I.pencils, I.pencil, I.saveG, T(I.blobStar, 35), I.vtools, A(11),
  I.multi, I.trash, I.cut, I.copy, I.paste, I.undo, I.redo, S(9), I.tag, I.diagram, I.tagOn, I.tagPin, I.tagEye, I.tagMove, I.tagRot, I.tagEdit,
  S(7), I.db, S(8, 1), I.metasearch, S(7), I.python, I.target, S(8), I.help, S(8), S(9), I.setsq, I.blobMove, A(12), I.blobRot, I.hex, I.ringStar,
  I.partStar, I.fillStar, I.ringX, I.partX, I.reshape, I.offset, I.vrot, I.trim];

function Items({ items }) {
  return items.map((it, i) => {
    if (it === "active") return <ActiveTool key={i}>{I.select}<Down /></ActiveTool>;
    if (it.sep) return <Sep key={i} $w={it.sep} $after={it.after} />;
    if (it.arrow) return <ArrowBox key={i} $w={it.arrow}><Down /></ArrowBox>;
    if (it.icon) return <Tool key={i} $w={it.w}>{it.icon}</Tool>;
    return <Tool key={i}>{it}</Tool>;
  });
}

const LAYERS = [
  { name: "Kentucky_10K_NAIP", c: "#ec6f8a", ls: 0.1 },
  { name: "Kentucky_20k_NAIP", c: "#8f5899", ls: 0.1 },
  { name: "KYAPED_1FT_Aerial_Tile_Index", c: "#ff9e02", ls: 0.03 },
  { name: "KYAPED_Available_DEMs_5FT_Tile_Index", c: "#b87548", sel: true },
];

const MENU = [
  { t: "_Zoom to Layer", icon: I.zoomLayer(16) },
  { t: "_Zoom to Selection", icon: I.zoomSel(16) },
  { t: "_Show in Overview", icon: I.overview },
  { t: "Show Feature Count" }, { t: "Copy Layer" }, { t: "Re_name Layer" }, null,
  { t: "_Duplicate Layer", icon: I.dup }, { t: "_Remove Layer…", icon: I.remove }, null,
  { t: "Move to _Top" }, null,
  { t: "_Open Attribute Table", icon: I.tableS }, { t: "_Filter…" }, { t: "Change Data Source…" }, null,
  { t: "_Set Layer Scale Visibility…" }, { t: "Set CRS", sub: true }, null,
  { t: "Export", sub: true, on: true }, null,
  { t: "Styles", sub: true }, { t: "_Properties…" },
];
const SUBMENU = [{ t: "Save Features As…" }, { t: "Save Selected Features As…", on: true }, { t: "Save as Layer Definition File…" }, { t: "Save as QGIS Layer Style File…" }];

function Mnemonic({ text }) {
  const k = text.indexOf("_");
  if (k < 0) return text;
  return <>{text.slice(0, k)}<u>{text[k + 1]}</u>{text.slice(k + 2)}</>;
}
function MenuItems({ items, child }) {
  return items.map((m, i) => m === null ? <Rule key={i} /> : (
    <MenuRow key={i} $on={m.on} $sub={child}>
      <IconSlot>{m.icon}</IconSlot>
      <Label><Mnemonic text={m.t} /></Label>
      {m.sub && <SubArrow $on={m.on} />}
    </MenuRow>
  ));
}

const STEP = 78.42;
function MapCanvas() {
  const xs = Array.from({ length: 15 }, (_, i) => Math.round(34 + i * STEP) + 0.5);
  const ys = Array.from({ length: 12 }, (_, i) => Math.round(32.4 + i * STEP) + 0.5);
  return (
    <svg width="1187" height="962" display="block">
      {xs.map(x => <path key={x} d={`M${x} 0V962`} stroke="#84604f" />)}
      {ys.map(y => <path key={y} d={`M0 ${y}H1187`} stroke="#84604f" />)}
      <rect x={xs[2]} y={ys[2]} width={xs[8] - xs[2]} height={ys[7] - ys[2]} fill="#ff0" stroke="#3b3b10" />
      {xs.slice(3, 8).map(x => <path key={x} d={`M${x} ${ys[2]}V${ys[7]}`} stroke="#33330a" />)}
      {ys.slice(3, 7).map(y => <path key={y} d={`M${xs[2]} ${y}H${xs[8]}`} stroke="#33330a" />)}
    </svg>
  );
}

export default function App() {
  return (
    <Window>
      <Global />
      <TitleBar>
        <Lights><Light $c="#fc5b57" /><Light $c="#fdbc2e" /><Light $c="#27c840" /></Lights>
        <Title>*Untitled Project - QGIS</Title>
      </TitleBar>
      <Toolbar $h={38}>
        <Items items={ROW1} />
        <Field $w={95} $mr={1}>12<Spin><Up /><Down /></Spin></Field>
        <Field $w={81} $mr={0}>px<Down /></Field>
        <Tool>{I.topo}</Tool><Tool>{I.cross}</Tool><Tool>{I.crossPoly}</Tool><ArrowBox $w={10}><Down /></ArrowBox>
      </Toolbar>
      <Toolbar $h={40}><Items items={ROW2} /></Toolbar>
      <Body>
        <Panel>
          <PanelHead>Layers{I.close}</PanelHead>
          <PanelTools>
            <PTool $on>{I.brush}</PTool><PTool>{I.addGroup}</PTool><PTool>{I.eye}</PTool><PTool>{I.funnel}</PTool><PTool>{I.expr}</PTool>
            <ArrowBox $w={12}><Down /></ArrowBox>
            <PTool>{I.expand}</PTool><PTool>{I.collapse}</PTool><PTool>{I.remove}</PTool>
          </PanelTools>
          <List>
            {LAYERS.map(l => (
              <LayerRow key={l.name} $sel={l.sel}>
                <LayerEye on={l.sel} /><Swatch $c={l.c} /><LayerName $u={l.sel} $ls={l.ls}>{l.name}</LayerName>
              </LayerRow>
            ))}
          </List>
          <Tabs><Tab $w={68} $h={26}>Layers</Tab><Tab $w={77} $h={21}>Browser</Tab></Tabs>
        </Panel>
        <MapFrame><MapCanvas /></MapFrame>
      </Body>
      <Status>
        <StatusBit $w={218} $mr={879} $c="#a0a0a0" /><StatusBit $w={117} $mr={66} $c="#222" />
        <StatusBit $w={121} $mr={86} $c="#555" /><StatusBit $w={78} $mr={0} $c="#444" />
      </Status>
      <Menu $x={309} $y={236} $w={222}><MenuItems items={MENU} /></Menu>
      <Menu $x={526} $y={573} $w={254}><MenuItems items={SUBMENU} child /></Menu>
    </Window>
  );
}
